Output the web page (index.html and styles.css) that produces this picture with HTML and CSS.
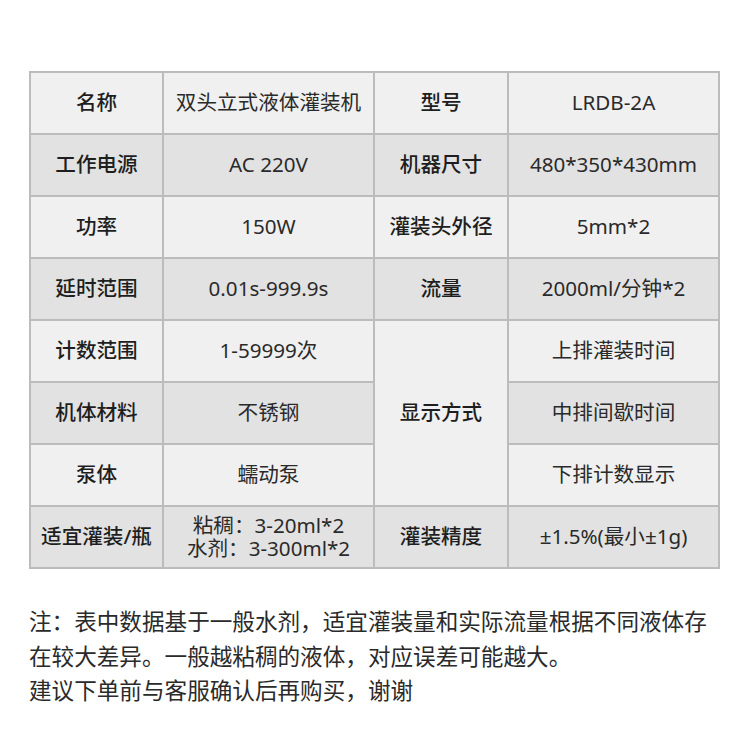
FILE: index.html
```html
<!DOCTYPE html>
<html lang="zh-CN">
<head>
<meta charset="utf-8">
<link rel="stylesheet" href="styles.css">
</head>
<body>
<div class="page">
  <table class="spec">
    <colgroup>
      <col class="c1"><col class="c2"><col class="c3"><col class="c4">
    </colgroup>
    <tr class="light">
      <th>名称</th><td>双头立式液体灌装机</td><th>型号</th><td>LRDB-2A</td>
    </tr>
    <tr class="dark">
      <th>工作电源</th><td>AC 220V</td><th>机器尺寸</th><td>480*350*430mm</td>
    </tr>
    <tr class="light">
      <th>功率</th><td>150W</td><th>灌装头外径</th><td>5mm*2</td>
    </tr>
    <tr class="dark">
      <th>延时范围</th><td>0.01s-999.9s</td><th>流量</th><td>2000ml/分钟*2</td>
    </tr>
    <tr class="light">
      <th>计数范围</th><td>1-59999次</td><th rowspan="3" class="light-cell">显示方式</th><td>上排灌装时间</td>
    </tr>
    <tr class="dark">
      <th>机体材料</th><td>不锈钢</td><td>中排间歇时间</td>
    </tr>
    <tr class="light">
      <th>泵体</th><td>蠕动泵</td><td>下排计数显示</td>
    </tr>
    <tr class="dark">
      <th>适宜灌装/瓶</th><td class="two">粘稠：3-20ml*2<br>水剂：3-300ml*2</td><th>灌装精度</th><td>±1.5%(最小±1g)</td>
    </tr>
  </table>
  <div class="notes">
    <p>注：表中数据基于一般水剂，适宜灌装量和实际流量根据不同液体存</p>
    <p>在较大差异。一般越粘稠的液体，对应误差可能越大。</p>
    <p>建议下单前与客服确认后再购买，谢谢</p>
  </div>
</div>
</body>
</html>
```

FILE: styles.css
```css
html, body {
  margin: 0;
  padding: 0;
  background: #ffffff;
}
.page {
  padding: 71px 0 0 29px;
  font-family: "Noto Sans CJK SC", "Noto Sans", sans-serif;
}
.spec {
  border-collapse: collapse;
  table-layout: fixed;
  width: 691px;
  font-family: "Noto Sans", "Noto Sans CJK SC", sans-serif;
}
.c1 { width: 133px; }
.c2 { width: 211px; }
.c3 { width: 134px; }
.c4 { width: 211px; }
.spec th, .spec td {
  border: 2px solid #bcbcbc;
  height: 60px;
  padding: 0;
  text-align: center;
  vertical-align: middle;
  font-size: 20.6px;
  line-height: 1.15;
  color: #2a2a2a;
}
.spec th {
  font-weight: 500;
  color: #1e1e1e;
}
.spec td {
  font-weight: 400;
}
.light th, .light td { background: #f0f0f0; }
.dark th, .dark td { background: #e2e2e2; }
.spec th.light-cell { background: #f0f0f0; }
.spec td.two {
  line-height: 23.5px;
}
.notes {
  margin-top: 35px;
  font-size: 22.6px;
  color: #2a2a2a;
}
.notes p {
  margin: 0;
  line-height: 34.5px;
}
```
